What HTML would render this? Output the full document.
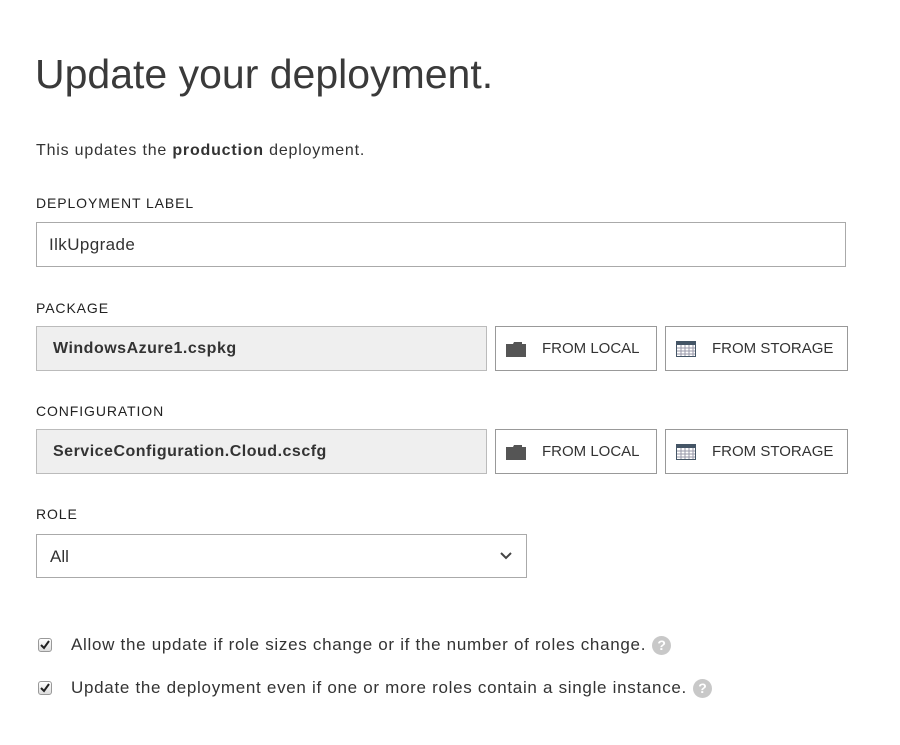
<!DOCTYPE html>
<html><head><style>
body{margin:0;width:900px;height:745px;background:#fff;font-family:"Liberation Sans",sans-serif;color:#222;position:relative;overflow:hidden}
.a{position:absolute;white-space:nowrap}
.lbl{font-size:14px;color:#222;letter-spacing:0.9px}
.box{position:absolute;border:1px solid #bbb;box-sizing:border-box}
.ro{background:#efefef;font-weight:bold;font-size:16px;color:#333;padding-left:16px;display:flex;align-items:center;letter-spacing:0.5px}
.btn{display:flex;align-items:center;font-size:15px;color:#333;border-color:#999}
.btn svg{margin:0 16px 0 10px}
.cb{position:absolute;width:14px;height:14px;border:1px solid #999;border-radius:3px;background:linear-gradient(#fff,#ddd);box-sizing:border-box}
.q{display:inline-block;width:19px;height:19px;border-radius:50%;background:#c8c8c8;color:#fff;font-weight:bold;font-size:14px;text-align:center;line-height:19px;vertical-align:middle;margin-left:6px;letter-spacing:0}
</style></head><body>
<div class="a" style="left:35px;top:51px;font-size:41px;color:#3a3a3a;font-weight:300">Update your deployment.</div>
<div class="a" style="left:36px;top:142px;font-size:16px;color:#333;letter-spacing:0.8px">This updates the <b>production</b> deployment.</div>
<div class="a lbl" style="left:36px;top:195px">DEPLOYMENT LABEL</div>
<div class="box" style="left:36px;top:222px;width:810px;height:45px;font-size:17px;padding:12px 0 0 12px;color:#333;border-color:#aaa;letter-spacing:0.4px">IlkUpgrade</div>
<div class="a lbl" style="left:36px;top:300px">PACKAGE</div>
<div class="box ro" style="left:36px;top:326px;width:451px;height:45px">WindowsAzure1.cspkg</div>
<div class="box btn" style="left:495px;top:326px;width:162px;height:45px"><svg width="20" height="16"><path d="M0 3h7l1-2h8v2h4v13H0z" fill="#555"/></svg>FROM LOCAL</div>
<div class="box btn" style="left:665px;top:326px;width:183px;height:45px"><svg width="20" height="16"><rect x="0" y="0" width="20" height="16" fill="#456"/><rect x="1" y="4" width="18" height="11" fill="#fff"/><path d="M1 7h18M1 10h18M1 13h18M5 4v11M9 4v11M13 4v11M17 4v11" stroke="#99a" stroke-width="1"/></svg>FROM STORAGE</div>
<div class="a lbl" style="left:36px;top:403px">CONFIGURATION</div>
<div class="box ro" style="left:36px;top:429px;width:451px;height:45px">ServiceConfiguration.Cloud.cscfg</div>
<div class="box btn" style="left:495px;top:429px;width:162px;height:45px"><svg width="20" height="16"><path d="M0 3h7l1-2h8v2h4v13H0z" fill="#555"/></svg>FROM LOCAL</div>
<div class="box btn" style="left:665px;top:429px;width:183px;height:45px"><svg width="20" height="16"><rect x="0" y="0" width="20" height="16" fill="#456"/><rect x="1" y="4" width="18" height="11" fill="#fff"/><path d="M1 7h18M1 10h18M1 13h18M5 4v11M9 4v11M13 4v11M17 4v11" stroke="#99a" stroke-width="1"/></svg>FROM STORAGE</div>
<div class="a lbl" style="left:36px;top:506px">ROLE</div>
<div class="box" style="left:36px;top:534px;width:491px;height:44px;font-size:17px;padding:12px 0 0 13px;color:#333;border-color:#aaa">All
<svg style="position:absolute;right:14px;top:17px" width="12" height="8"><path d="M1 1l5 5 5-5" stroke="#444" stroke-width="2" fill="none"/></svg></div>
<div class="cb" style="left:38px;top:638px"><svg width="12" height="12" style="position:absolute;left:0;top:0"><path d="M2 6l3 3 5-7" stroke="#222" stroke-width="2" fill="none"/></svg></div>
<div class="a" style="left:71px;top:635px;font-size:17px;color:#333;letter-spacing:0.7px">Allow the update if role sizes change or if the number of roles change.<span class="q">?</span></div>
<div class="cb" style="left:38px;top:681px"><svg width="12" height="12" style="position:absolute;left:0;top:0"><path d="M2 6l3 3 5-7" stroke="#222" stroke-width="2" fill="none"/></svg></div>
<div class="a" style="left:71px;top:678px;font-size:17px;color:#333;letter-spacing:0.7px">Update the deployment even if one or more roles contain a single instance.<span class="q">?</span></div>
</body></html>
